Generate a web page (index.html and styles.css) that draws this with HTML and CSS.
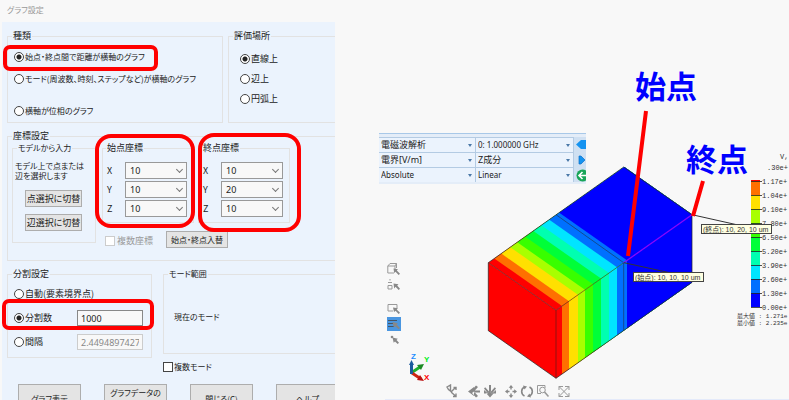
FILE: index.html
```html
<!DOCTYPE html>
<html lang="ja">
<head>
<meta charset="utf-8">
<title>グラフ設定</title>
<link rel="stylesheet" href="styles.css">
</head>
<body>
<div class="page">
<form class="dialog">
  <h1 class="dialog-title">グラフ設定</h1>
  <div class="dialog-body">
    <div class="row row-kind">
      <fieldset class="group kind">
        <legend>種類</legend>
        <label class="option"><input type="radio" name="kind" checked>始点・終点間で距離が横軸のグラフ</label>
        <label class="option">
          <input type="radio" name="kind">モード(周波数、時刻、ステップなど)が横軸のグラフ</label>
        <label class="option spaced"><input type="radio" name="kind">横軸が位相のグラフ</label>
      </fieldset>
      <fieldset class="group place open">
        <legend>評価場所</legend>
        <label class="option"><input type="radio" name="place" checked>直線上</label>
        <label class="option"><input type="radio" name="place">辺上</label>
        <label class="option"><input type="radio" name="place">円弧上</label>
      </fieldset>
    </div>

    <fieldset class="group coords open">
      <legend>座標設定</legend>
      <div class="coords-row">
        <fieldset class="group model">
          <legend>モデルから入力</legend>
          <p>モデル上で点または<br>辺を選択します</p>
          <button type="button" class="btn">点選択に切替</button>
          <button type="button" class="btn">辺選択に切替</button>
        </fieldset>
        <div class="points">
          <div class="points-row">
            <fieldset class="group point">
              <legend>始点座標</legend>
              <label class="axis">X<span class="combo"><select><option>10</option></select></span></label>
              <label class="axis">Y<span class="combo"><select><option>10</option></select></span></label>
              <label class="axis">Z<span class="combo"><select><option>10</option></select></span></label>
            </fieldset>
            <fieldset class="group point">
              <legend>終点座標</legend>
              <label class="axis">X<span class="combo"><select><option>10</option></select></span></label>
              <label class="axis">Y<span class="combo"><select><option>20</option></select></span></label>
              <label class="axis">Z<span class="combo"><select><option>10</option></select></span></label>
            </fieldset>
          </div>
          <div class="points-actions">
            <label class="option disabled"><input type="checkbox" disabled>複数座標</label>
            <button type="button" class="btn">始点・終点入替</button>
          </div>
        </div>
      </div>
    </fieldset>

    <div class="row row-split">
      <fieldset class="group split">
        <legend>分割設定</legend>
        <div class="field"><label class="option"><input type="radio" name="split">自動(要素境界点)</label></div>
        <div class="field"><label class="option"><input type="radio" name="split" checked>分割数</label><input class="text" type="text" value="1000" aria-label="分割数"></div>
        <div class="field"><label class="option"><input type="radio" name="split">間隔</label><input class="text" type="text" value="2.44948974278" aria-label="間隔" disabled></div>
      </fieldset>
      <div class="mode-col">
        <fieldset class="group mode open">
          <legend>モード範囲</legend>
          <p>現在のモード</p>
        </fieldset>
        <label class="option"><input type="checkbox">複数モード</label>
      </div>
    </div>

    <div class="actions">
      <button type="button" class="btn">グラフ表示</button>
      <button type="button" class="btn two-line">グラフデータの</button>
      <button type="button" class="btn">閉じる(C)</button>
      <button type="button" class="btn">ヘルプ</button>
    </div>
  </div>
  <div class="mark mark-kind"></div>
  <div class="mark mark-start"></div>
  <div class="mark mark-end"></div>
  <div class="mark mark-split"></div>
</form>

<main class="view">
  <svg class="canvas" viewBox="335 0 454 400" preserveAspectRatio="xMinYMin meet" role="img" aria-label="電界分布">
    <defs>
      <g id="bands">
        <rect width="136" height="68" fill="#f00"/>
        <rect x="6" width="130" height="68" fill="#ff7000"/>
        <rect x="13" width="123" height="68" fill="#ffe000"/>
        <rect x="22" width="114" height="68" fill="#a8ff00"/>
        <rect x="29" width="107" height="68" fill="#38ff00"/>
        <rect x="37" width="99" height="68" fill="#00ff38"/>
        <rect x="45" width="91" height="68" fill="#00ffb0"/>
        <rect x="53" width="83" height="68" fill="#00e5ff"/>
        <rect x="61" width="75" height="68" fill="#0070ff"/>
        <rect x="71" width="65" height="68" fill="#00f"/>
      </g>
    </defs>

    <!-- Solid with its field bands: side, top and end faces -->
    <use href="#bands" transform="matrix(1 -.7045 0 1 556 310.3)"/>
    <use href="#bands" transform="matrix(1 -.7045 -.9956 -.7 556 310.3)"/>
    <path d="M488.3 262.7 556 310.3V378.3L488.3 330.7Z" fill="#f00"/>
    <g fill="none" stroke="#222" stroke-width=".7">
      <path d="M488.3 262.7 623.7 167 692 214.7V282.3L556 378.3 488.3 330.7Z"/>
      <path d="M488.3 262.7 556 310.3V378.3M556 310.3 623.7 262.7V330.7M623.7 262.7 556 214.7" stroke-opacity=".7"/>
    </g>
    <path d="M623.7 262.7 692 214.7" stroke="#80f" stroke-width="1.3"/>
    <path d="M692 214.7 738 225M624 262.7 671 273" stroke="#333" fill="none"/>

    <!-- Colour scale -->
    <g>
      <rect x="751" y="180" width="9" height="2" fill="#f00"/>
      <rect x="751" y="181" width="9" height="14" fill="#ff7000"/>
      <rect x="751" y="195" width="9" height="14" fill="#ffe000"/>
      <rect x="751" y="209" width="9" height="14" fill="#a8ff00"/>
      <rect x="751" y="223" width="9" height="14" fill="#38ff00"/>
      <rect x="751" y="237" width="9" height="14" fill="#00ff38"/>
      <rect x="751" y="251" width="9" height="14" fill="#00ffb0"/>
      <rect x="751" y="265" width="9" height="14" fill="#00e5ff"/>
      <rect x="751" y="279" width="9" height="14" fill="#0070ff"/>
      <rect x="751" y="293" width="9" height="14" fill="#00f"/>
      <path d="M751 181.500H762M751 195.500H762M751 209.500H762M751 223.500H762M751 237.500H762M751 251.500H762M751 265.500H762M751 279.500H762M751 293.500H762M751 307.500H762" stroke="#222" stroke-width=".8"/>
    </g>
    <g class="scale">
      <text x="780" y="159">V,</text>
      <text x="767" y="170">.30e+</text>
      <text x="762" y="184">1.17e+</text>
      <text x="762" y="198">1.04e+</text>
      <text x="762" y="212">9.10e+</text>
      <text x="762" y="226">7.80e+</text>
      <text x="762" y="240">6.50e+</text>
      <text x="762" y="254">5.20e+</text>
      <text x="762" y="268">3.90e+</text>
      <text x="762" y="282">2.60e+</text>
      <text x="762" y="296">1.30e+</text>
      <text x="762" y="310">0.00e+</text>
    </g>
    <g class="extremes">
      <text x="737" y="318">最大値 : 1.271e</text>
      <text x="737" y="325">最小値 : 2.235e</text>
    </g>

    <!-- Point tags -->
    <g class="tag">
      <rect x="633.500" y="272.500" width="70" height="9"/>
      <text x="635" y="280">(始点): 10, 10, 10 um</text>
      <rect x="701.500" y="224.500" width="70" height="9"/>
      <text x="703" y="232">(終点): 10, 20, 10 um</text>
    </g>

    <!-- Callouts -->
    <path d="M646 111 628 256M703 181 693 216" stroke="#f00" stroke-width="4" fill="none"/>
    <g class="callout">
      <text x="635" y="98">始点</text>
      <text x="686" y="171">終点</text>
    </g>

    <!-- Axis triad -->
    <g fill="none" stroke-width="3">
      <path d="M411 373 420 367" stroke="#1fae2a"/>
      <path d="M412 373 421 379" stroke="#c21"/>
      <path d="M411.500 374V363" stroke="#1b5a9c"/>
    </g>
    <path d="M411.500 360 414 365H409Z" fill="#1b5a9c"/>
    <path d="M424 364 421 370 417 365Z" fill="#1c8a24"/>
    <path d="M424 381 417 380 420 375Z" fill="#b11"/>
    <g class="triad">
      <text class="axis-z" x="411" y="359">Z</text>
      <text class="axis-y" x="424" y="362">Y</text>
      <text class="axis-x" x="424" y="380">X</text>
    </g>
    <path d="M385 399.500H789" stroke="#e4eafa"/>
  </svg>

  <div class="results">
    <div class="results-grid">
      <span class="pick"><select aria-label="解析"><option>電磁波解析</option></select></span>
      <span class="pick latin"><select aria-label="周波数"><option>0: 1.000000 GHz</option></select></span>
      <button type="button" class="step" aria-label="前へ"><svg viewBox="0 0 12 15"><path d="M2 7.500 7 3H12V12H7Z" fill="#1593f0"/></svg></button>
      <span class="pick"><select aria-label="物理量"><option>電界[V/m]</option></select></span>
      <span class="pick"><select aria-label="成分"><option>Z成分</option></select></span>
      <button type="button" class="step" aria-label="次へ"><svg viewBox="0 0 12 15"><path d="M5 4H7L11 8 7 12H5Z" fill="#1593f0" stroke="#0b70c8" stroke-width=".7"/></svg></button>
      <span class="pick latin"><select aria-label="値"><option>Absolute</option></select></span>
      <span class="pick latin"><select aria-label="目盛"><option>Linear</option></select></span>
      <button type="button" class="step" aria-label="更新"><svg viewBox="0 0 12 15"><circle cx="8.500" cy="8.500" r="6" fill="#18a558"/><path d="M12 8.500H5.500M8.500 5 5 8.500 8.500 12" fill="none" stroke="#fff" stroke-width="1.600"/></svg></button>
    </div>
  </div>

  <div class="tools tools-side">
    <button type="button" aria-label="立体選択"><svg viewBox="0 0 14 14"><path d="M.8 4 3 1.500H9.500L8 4ZM.8 4V11H7M8 4V7M9.500 1.500V6" class="thin"/><path d="M6.500 6.500 11 7.200 9.800 8.500 13 11.700 11.700 13 8.500 9.800 7.200 11Z"/></svg></button>
    <button type="button" aria-label="部品選択"><svg viewBox="0 0 14 14"><path d="M3 1V2.500M1 4.500H5M1 7.500H5V11H1Z" class="thin"/><path d="M6.500 5.500 11.500 6.200 10.200 7.500 13 10.700 11.700 12 8.500 8.800 7.200 10.500Z"/></svg></button>
    <button type="button" class="apart" aria-label="面選択"><svg viewBox="0 0 14 14"><path d="M6 10H1V3.500H10V7" class="thin"/><path d="M6 6.500 11 7.200 9.700 8.500 13 11.700 11.700 13 8.500 9.800 7 11Z"/></svg></button>
    <button type="button" class="on" aria-label="線選択"><svg viewBox="0 0 14 14"><path d="M1 3.500H10M1 6.500H7M1 9.500H7" class="thin"/><path d="M5.500 5 11 6.200 9.700 7.500 13 11 11.700 12.300 8.200 9.200 6.800 10.500Z"/></svg></button>
    <button type="button" aria-label="点選択"><svg viewBox="0 0 14 14"><circle cx="5" cy="4" r="1.300"/><path d="M5.500 4.500 10.800 5.700 9.500 7 12 9.700 10.700 11 8 8.500 6.700 9.800Z"/></svg></button>
  </div>

  <div class="tools tools-bottom">
    <button type="button" aria-label="回転"><svg viewBox="0 0 14 14"><path d="M1 3 4.500 1V7L2.500 5.500ZM5 8 9.500 3.500M7.500 3.500H10V6M5 8 9.500 12M10 9.500V12.500H7" fill="none" stroke="#888" stroke-width="1.400"/></svg></button>
    <button type="button" class="wide" aria-label="左へ回転"><svg viewBox="0 0 14 14"><path d="M1 7.500 7 3V6.500H13V8.500H7V12ZM5 6 9 1.500 11 3 7 7.500ZM5 9 9 13.500 11 12 7 7.500Z"/></svg></button>
    <button type="button" aria-label="下へ回転"><svg viewBox="0 0 14 14"><path d="M7 13.500 3 9H6V1H8V9H11ZM1 4.500 2.200 3.300 6.500 8 5 9.500ZM13 4.500 11.800 3.300 7.500 8 9 9.500ZM1 6V9.500H5ZM13 6V9.500H9Z"/></svg></button>
    <button type="button" class="wide" aria-label="移動"><svg viewBox="0 0 14 14"><path d="M7 1 9.300 3.800H7.700V5.500H6.300V3.800H4.700ZM7 14 9.300 11.200H7.700V9.500H6.300V11.200H4.700ZM1 7.500 3.800 5.200V6.800H5.500V8.200H3.800V9.800ZM13 7.500 10.200 5.200V6.800H8.500V8.200H10.200V9.800Z"/></svg></button>
    <button type="button" aria-label="回す"><svg viewBox="0 0 14 14"><path d="M4.500 12A5 5 0 0 1 4.500 3M9.500 3A5 5 0 0 1 9.500 12" fill="none" stroke="#888" stroke-width="1.600"/><path d="M3 1.500 7 2.500 4.500 5.500ZM11 13.500 7 12.500 9.500 9.500Z"/></svg></button>
    <button type="button" aria-label="拡大"><svg viewBox="0 0 14 14"><path d="M5 9.500H1.500V1.500H9V4" class="thin"/><circle cx="6.500" cy="6" r="2.800" class="thin"/><path d="M8.500 8 12.500 12.500" stroke="#999" stroke-width="1.600"/></svg></button>
    <button type="button" class="wide" aria-label="全体表示"><svg viewBox="0 0 14 14"><path d="M2 6V2.500H6M8 2.500H12V6M12 9V12.500H8M6 12.500H2V9M2 2.500 12 12.500M12 2.500 2 12.500" class="thin"/></svg></button>
  </div>
</main>
</div>
</body>
</html>
```
FILE: styles.css
```css
* { box-sizing: border-box; }

body {
  margin: 0;
  background: #f8f8f8;
  color: #222;
  font: 9px/12px "Noto Sans CJK JP", sans-serif;
  font-feature-settings: "palt";
}

.page {
  display: grid;
  grid-template-columns: 335px 1fr;
  height: 100vh;
  overflow: hidden;
}

p { margin: 0; }

button, input, select {
  margin: 0;
  padding: 0;
  color: inherit;
  font: inherit;
  font-feature-settings: inherit;
}

/* Dialog */
.dialog {
  position: relative;
  display: flex;
  flex-direction: column;
  overflow: hidden;
}
.dialog-title {
  margin: 0;
  padding: 4px 7px 6px;
  color: #999;
  font-size: 8px;
  font-weight: 400;
  line-height: 12px;
}
.dialog-body {
  flex: 1;
  display: flex;
  flex-direction: column;
  gap: 7px;
  margin-left: 2px;
  padding: 8px 0 0 5px;
  background: #ebf3fd;
}

.row { display: grid; }
.row-kind { grid-template-columns: 216px 1fr; gap: 5px; }
.row-split { grid-template-columns: 145px 1fr; gap: 11px; }

.group {
  min-width: 0;
  margin: 0;
  padding: 0 6px;
  border: 1px solid #e2e2e2;
}
.group.open { border-right: 0; }
legend { margin-left: -2px; padding: 0 1px; }

.option { display: flex; align-items: center; gap: 1px; white-space: nowrap; }
.option.disabled { color: #999; gap: 2px; }
.option input {
  flex: none;
  width: 10px;
  height: 10px;
  appearance: none;
  border: 1px solid #444;
  background: #fff;
}
.option input[type="radio"] { border-radius: 50%; }
.option input[type="radio"]:checked { background: radial-gradient(circle, #222 2px, #fff 3px); }
.option input:disabled { border-color: #ccc; }

.kind { height: 93px; padding-top: 9px; }
.kind .option { margin-bottom: 10px; font-size: 8px; }
.kind .spaced { margin-top: 20px; }
.place { padding: 11px 11px 0; }
.place legend { margin-left: -7px; }
.place .option { margin-bottom: 8px; }

.btn {
  border: 1px solid #adadad;
  background: #e4e4e4;
  text-align: center;
  white-space: nowrap;
}

.coords { height: 131px; padding: 0 0 0 4px; }
.coords legend { margin-left: 0; }
.coords-row { display: flex; align-items: flex-start; gap: 6px; }
.model { width: 84px; height: 101px; padding: 7px 2px 0; font-size: 8px; line-height: 10px; }
.model legend { margin-left: 2px; line-height: 12px; }
.model .btn { display: block; width: 57px; height: 17px; margin: 9px 0 0 10px; font-size: 9px; }
.model .btn + .btn { margin-top: 7px; }
.points { flex: 1; }
.points-row { display: flex; gap: 4px; }
.point { width: 92px; height: 81px; padding: 8px 6px 0 4px; }
.point legend { margin-left: -1px; }
.axis { display: flex; justify-content: space-between; align-items: center; margin-bottom: 2px; }
.combo { position: relative; width: 62px; }
.combo select {
  display: block;
  width: 100%;
  height: 17px;
  padding: 0 4px;
  appearance: none;
  border: 1px solid #999;
  border-radius: 0;
  background: #f8f8f8;
  font-family: "Noto Sans", sans-serif;
}
.combo::after {
  content: "";
  position: absolute;
  top: 5px;
  right: 5px;
  width: 4px;
  height: 4px;
  border: solid #777;
  border-width: 0 1px 1px 0;
  transform: rotate(45deg);
}
.points-actions { display: flex; align-items: center; gap: 13px; padding: 8px 0 0 3px; }
.points-actions .btn { width: 62px; height: 17px; font-size: 8px; }
.points-actions .option { padding-top: 3px; }

.split { height: 90px; padding-top: 6px; }
.field { display: flex; align-items: center; justify-content: space-between; height: 16px; margin-bottom: 8px; }
.text {
  width: 66px;
  height: 16px;
  margin-right: 2px;
  padding: 0 3px;
  border: 1px solid #888;
  background: #f8f8f8;
  font-family: "Noto Sans", sans-serif;
}
.text:disabled { border-color: #ccc; color: #888; }
.mode-col { font-size: 8px; }
.mode { height: 86px; margin-bottom: 7px; padding: 31px 10px 0; }
.mode legend { margin-left: -6px; }

.actions { display: flex; gap: 23px; margin-top: 4px; padding-left: 11px; }
.actions .btn { flex: 0 0 63px; height: 30px; font-size: 8px; line-height: 16px; }
.actions .two-line { padding-bottom: 12px; }

/* Highlight frames drawn over the dialog */
.mark { position: absolute; border: 4px solid #f00; border-radius: 7px; pointer-events: none; }
.mark-kind { left: 3px; top: 45px; width: 155px; height: 26px; }
.mark-start { left: 95px; top: 134px; width: 100px; height: 94px; border-radius: 16px; }
.mark-end { left: 198px; top: 133px; width: 103px; height: 99px; border-radius: 16px; }
.mark-split { left: 2px; top: 299px; width: 152px; height: 31px; }

/* Result view */
.view { position: relative; overflow: hidden; }
.canvas { display: block; width: 100%; height: 100%; }
.canvas text { fill: #333; }
.scale text { font: 7px "Liberation Mono", monospace; }
.extremes text { font: 6px "Liberation Mono", "Noto Sans CJK JP", monospace; }
.tag rect { fill: #ffffe1; stroke: #444; }
.tag text { font: 7px "Liberation Sans", "Noto Sans CJK JP", sans-serif; }
.canvas .callout text { fill: #00f; font: 700 31px "Noto Sans CJK JP", sans-serif; font-feature-settings: normal; }
.triad text { font: 700 8px "Liberation Sans", sans-serif; }
.canvas .axis-z { fill: #1e8cff; }
.canvas .axis-y { fill: #0e2; }
.canvas .axis-x { fill: #f00; }

.results {
  position: absolute;
  left: 44px;
  top: 133px;
  padding: 4px 0 2px;
  background: linear-gradient(#a8c8e8 0 1px, #e4edf8 1px);
}
.results-grid { display: grid; grid-template-columns: 97px 98px 12px; grid-auto-rows: 15px; background: #cfe0f2; }
.pick { position: relative; border: solid #b4cbe3; border-width: 1px 1px 0 0; background: #ebf3fd; }
.pick select {
  display: block;
  width: 100%;
  height: 14px;
  padding: 0 2px;
  appearance: none;
  border: 0;
  background: none;
  font-family: "Noto Sans", "Noto Sans CJK JP", sans-serif;
}
.pick.latin select { font-size: 8px; }
.pick::after {
  content: "";
  position: absolute;
  top: 6px;
  right: 3px;
  border: 2px solid transparent;
  border-top: 3px solid #4a78a8;
  border-bottom: 0;
}
.step { border: 0; background: none; }
.step svg { display: block; width: 12px; height: 15px; }

.tools { position: absolute; display: flex; }
.tools button { width: 14px; height: 14px; border: 0; background: none; }
.tools svg { display: block; width: 14px; height: 14px; fill: #888; }
.tools .thin { fill: none; stroke: #999; stroke-width: 1; }
.tools-side { left: 52px; top: 262px; flex-direction: column; gap: 2px; }
.tools-side .apart { margin-top: 7px; }
.tools-side .on { background: #4a96e0; }
.tools-side .on .thin { stroke: #456; }
.tools-bottom { left: 111px; top: 384px; gap: 2px; }
.tools-bottom .wide { margin-left: 5px; }
```
